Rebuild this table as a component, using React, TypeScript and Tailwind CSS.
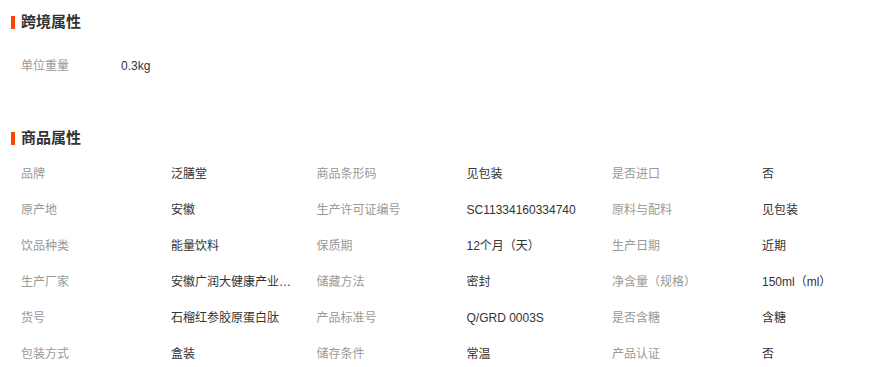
const crossBorder = [{ label: "单位重量", value: "0.3kg" }];

const attrs: { label: string; value: string }[][] = [
  [
    { label: "品牌", value: "泛膳堂" },
    { label: "商品条形码", value: "见包装" },
    { label: "是否进口", value: "否" },
  ],
  [
    { label: "原产地", value: "安徽" },
    { label: "生产许可证编号", value: "SC11334160334740" },
    { label: "原料与配料", value: "见包装" },
  ],
  [
    { label: "饮品种类", value: "能量饮料" },
    { label: "保质期", value: "12个月（天）" },
    { label: "生产日期", value: "近期" },
  ],
  [
    { label: "生产厂家", value: "安徽广润大健康产业有限公司" },
    { label: "储藏方法", value: "密封" },
    { label: "净含量（规格）", value: "150ml（ml）" },
  ],
  [
    { label: "货号", value: "石榴红参胶原蛋白肽" },
    { label: "产品标准号", value: "Q/GRD 0003S" },
    { label: "是否含糖", value: "含糖" },
  ],
  [
    { label: "包装方式", value: "盒装" },
    { label: "储存条件", value: "常温" },
    { label: "产品认证", value: "否" },
  ],
];

function SectionTitle({ text }: { text: string }) {
  return (
    <div className="flex items-center h-[30px] pl-[11px]">
      <span className="w-[4px] h-[13px] bg-[#ff4400]" />
      <h2 className="ml-[6px] text-[15px] font-bold text-[#333]">{text}</h2>
    </div>
  );
}

function Cell({ label, value }: { label: string; value: string }) {
  return (
    <div className="flex items-center w-[295.5px] shrink-0">
      <span className="w-[150px] shrink-0 text-[#999]">{label}</span>
      <span className="max-w-[124px] truncate text-[#333]">{value}</span>
    </div>
  );
}

export default function App() {
  return (
    <div
      className="w-[889px] h-[367px] bg-white overflow-hidden pt-[7px] text-[12px]"
      style={{ fontFamily: '"Liberation Sans", "Noto Sans CJK SC", sans-serif' }}
    >
      <SectionTitle text="跨境属性" />
      <div className="mt-[11px] pl-[21px]">
        {crossBorder.map((row) => (
          <div key={row.label} className="flex items-center h-9">
            <span className="w-[100px] text-[#999]">{row.label}</span>
            <span className="text-[#333]">{row.value}</span>
          </div>
        ))}
      </div>

      <div className="mt-[39px]">
        <SectionTitle text="商品属性" />
        <div className="mt-[3px] pl-[21px]">
          {attrs.map((row, i) => (
            <div key={i} className="flex h-9">
              {row.map((c) => (
                <Cell key={c.label} label={c.label} value={c.value} />
              ))}
            </div>
          ))}
        </div>
      </div>
    </div>
  );
}
